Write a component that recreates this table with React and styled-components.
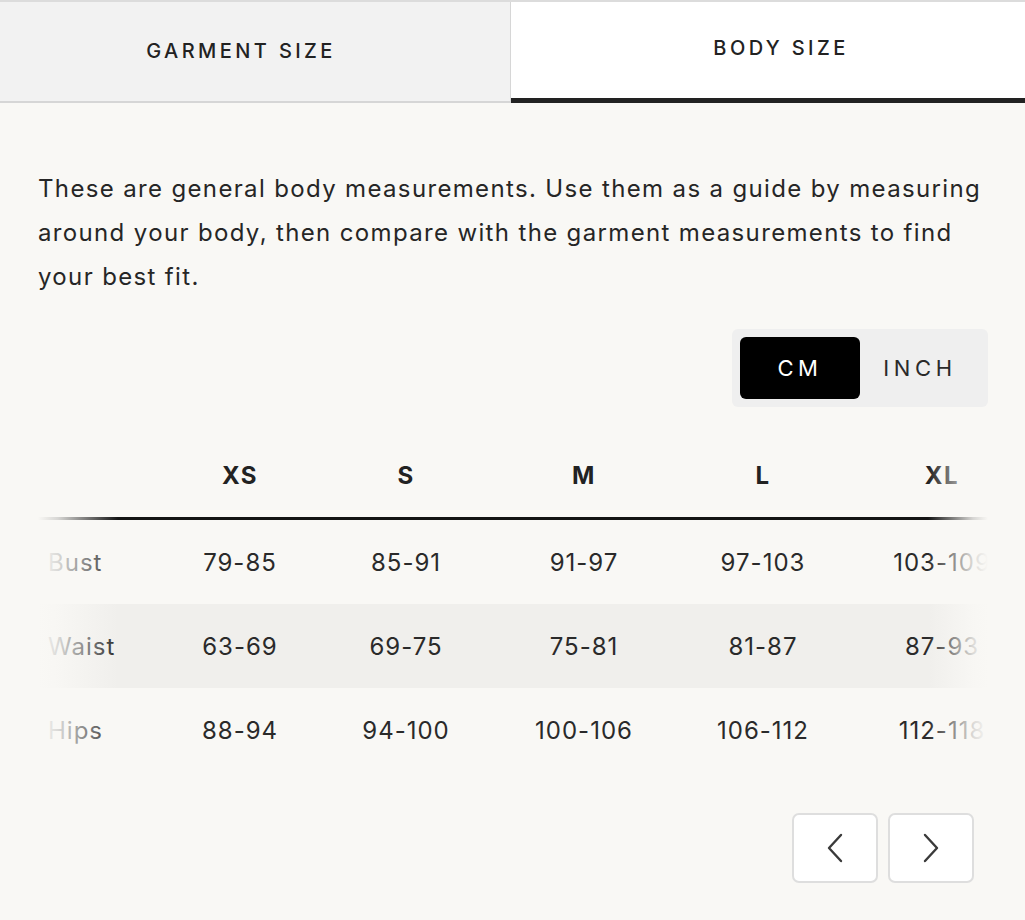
import React, { useState } from "react";
import styled, { createGlobalStyle } from "styled-components";

const GlobalStyle = createGlobalStyle`
  body {
    margin: 0;
    background: #f9f8f5;
    font-family: Inter, "Liberation Sans", sans-serif;
    color: #262626;
  }
`;

const Page = styled.div`
  width: 1025px;
  min-height: 920px;
  background: #f9f8f5;
  border-top: 2px solid #dcdcdc;
  box-sizing: border-box;
`;

const Tabs = styled.div`
  display: grid;
  grid-template-columns: 511px 1fr;
`;

const Tab = styled.button`
  height: 101px;
  border: none;
  border-bottom: ${(p) => (p.active ? "5px solid #222" : "2px solid #d6d6d6")};
  border-right: ${(p) => (p.active ? "none" : "1px solid #d6d6d6")};
  background: ${(p) => (p.active ? "#fff" : "#f2f2f2")};
  font-family: Inter, "Liberation Sans", sans-serif;
  font-size: 20px;
  font-weight: 500;
  letter-spacing: 3.4px;
  color: #222;
  padding: 0 ${(p) => (p.active ? "0" : "28px")} ${(p) => (p.active ? "5px" : "2px")}
    ${(p) => (p.active ? "26px" : "0")};
  cursor: pointer;
`;

const Body = styled.div`
  padding: 64px 37px 0 38px;
`;

const Intro = styled.p`
  margin: 0;
  font-size: 24px;
  line-height: 44px;
  letter-spacing: 1.35px;
  color: #262626;
`;

const UnitRow = styled.div`
  display: flex;
  justify-content: flex-end;
  margin-top: 30px;
`;

const UnitToggle = styled.div`
  display: flex;
  padding: 8px;
  background: #efefef;
  border-radius: 6px;
`;

const UnitButton = styled.button`
  width: 120px;
  height: 62px;
  border: none;
  border-radius: 6px;
  background: ${(p) => (p.active ? "#000" : "transparent")};
  color: ${(p) => (p.active ? "#fff" : "#2a2a2a")};
  font-family: Inter, "Liberation Sans", sans-serif;
  font-size: 22px;
  letter-spacing: 4.6px;
  cursor: pointer;
`;

const TableWrap = styled.div`
  position: relative;
  margin-top: 30px;
  width: 950px;
  overflow: hidden;
`;

const Grid = styled.div`
  display: grid;
  grid-template-columns: 122px 160px 172px 184px 174px 184px;
  width: 996px;
`;

const HeadCell = styled.div`
  height: 76px;
  padding-bottom: 4px;
  display: flex;
  align-items: center;
  justify-content: center;
  font-size: 24px;
  font-weight: 700;
  letter-spacing: 1.5px;
  color: #222;
  border-bottom: 3px solid #141414;
`;

const Cell = styled.div`
  height: 84px;
  display: flex;
  align-items: center;
  justify-content: ${(p) => (p.label ? "flex-start" : "center")};
  padding-left: ${(p) => (p.label ? "10px" : "0")};
  font-size: 24px;
  letter-spacing: 1px;
  color: #2a2a2a;
  background: ${(p) => (p.shaded ? "#f0efec" : "transparent")};
`;

const Fade = styled.div`
  position: absolute;
  top: 0;
  bottom: 0;
  width: ${(p) => p.w}px;
  ${(p) => p.side}: 0;
  pointer-events: none;
  background: linear-gradient(
    to ${(p) => (p.side === "left" ? "right" : "left")},
    #f9f8f5 0%,
    rgba(249, 248, 245, 0.85) 25%,
    rgba(249, 248, 245, 0) 100%
  );
`;

const Pager = styled.div`
  display: flex;
  justify-content: flex-end;
  gap: 10px;
  margin-top: 41px;
  padding-right: 14px;
`;

const PageButton = styled.button`
  width: 86px;
  height: 70px;
  background: #fff;
  border: 2px solid #dedede;
  border-radius: 7px;
  display: flex;
  align-items: center;
  justify-content: center;
  cursor: pointer;
`;

const Chevron = ({ dir }) => (
  <svg width="20" height="32" viewBox="0 0 20 32" fill="none">
    <path
      d={dir === "left" ? "M16 3 L4 16 L16 29" : "M4 3 L16 16 L4 29"}
      stroke="#3a3a3a"
      strokeWidth="2.4"
      strokeLinecap="round"
      strokeLinejoin="round"
    />
  </svg>
);

const sizes = ["XS", "S", "M", "L", "XL"];
const rows = [
  { name: "Bust", values: ["79-85", "85-91", "91-97", "97-103", "103-109"] },
  { name: "Waist", values: ["63-69", "69-75", "75-81", "81-87", "87-93"] },
  { name: "Hips", values: ["88-94", "94-100", "100-106", "106-112", "112-118"] },
];

export default function App() {
  const [tab, setTab] = useState("body");
  const [unit, setUnit] = useState("cm");

  return (
    <Page>
      <GlobalStyle />
      <Tabs>
        <Tab active={tab === "garment"} onClick={() => setTab("garment")}>
          GARMENT SIZE
        </Tab>
        <Tab active={tab === "body"} onClick={() => setTab("body")}>
          BODY SIZE
        </Tab>
      </Tabs>
      <Body>
        <Intro>
          These are general body measurements. Use them as a guide by measuring
          around your body, then compare with the garment measurements to find
          your best fit.
        </Intro>
        <UnitRow>
          <UnitToggle>
            <UnitButton active={unit === "cm"} onClick={() => setUnit("cm")}>
              CM
            </UnitButton>
            <UnitButton active={unit === "inch"} onClick={() => setUnit("inch")}>
              INCH
            </UnitButton>
          </UnitToggle>
        </UnitRow>
        <TableWrap>
          <Grid>
            <HeadCell />
            {sizes.map((s) => (
              <HeadCell key={s}>{s}</HeadCell>
            ))}
            {rows.map((r, i) => (
              <React.Fragment key={r.name}>
                <Cell label shaded={i === 1}>
                  {r.name}
                </Cell>
                {r.values.map((v, j) => (
                  <Cell key={j} shaded={i === 1}>
                    {v}
                  </Cell>
                ))}
              </React.Fragment>
            ))}
          </Grid>
          <Fade side="left" w={80} />
          <Fade side="right" w={60} />
        </TableWrap>
        <Pager>
          <PageButton aria-label="Previous">
            <Chevron dir="left" />
          </PageButton>
          <PageButton aria-label="Next">
            <Chevron dir="right" />
          </PageButton>
        </Pager>
      </Body>
    </Page>
  );
}
